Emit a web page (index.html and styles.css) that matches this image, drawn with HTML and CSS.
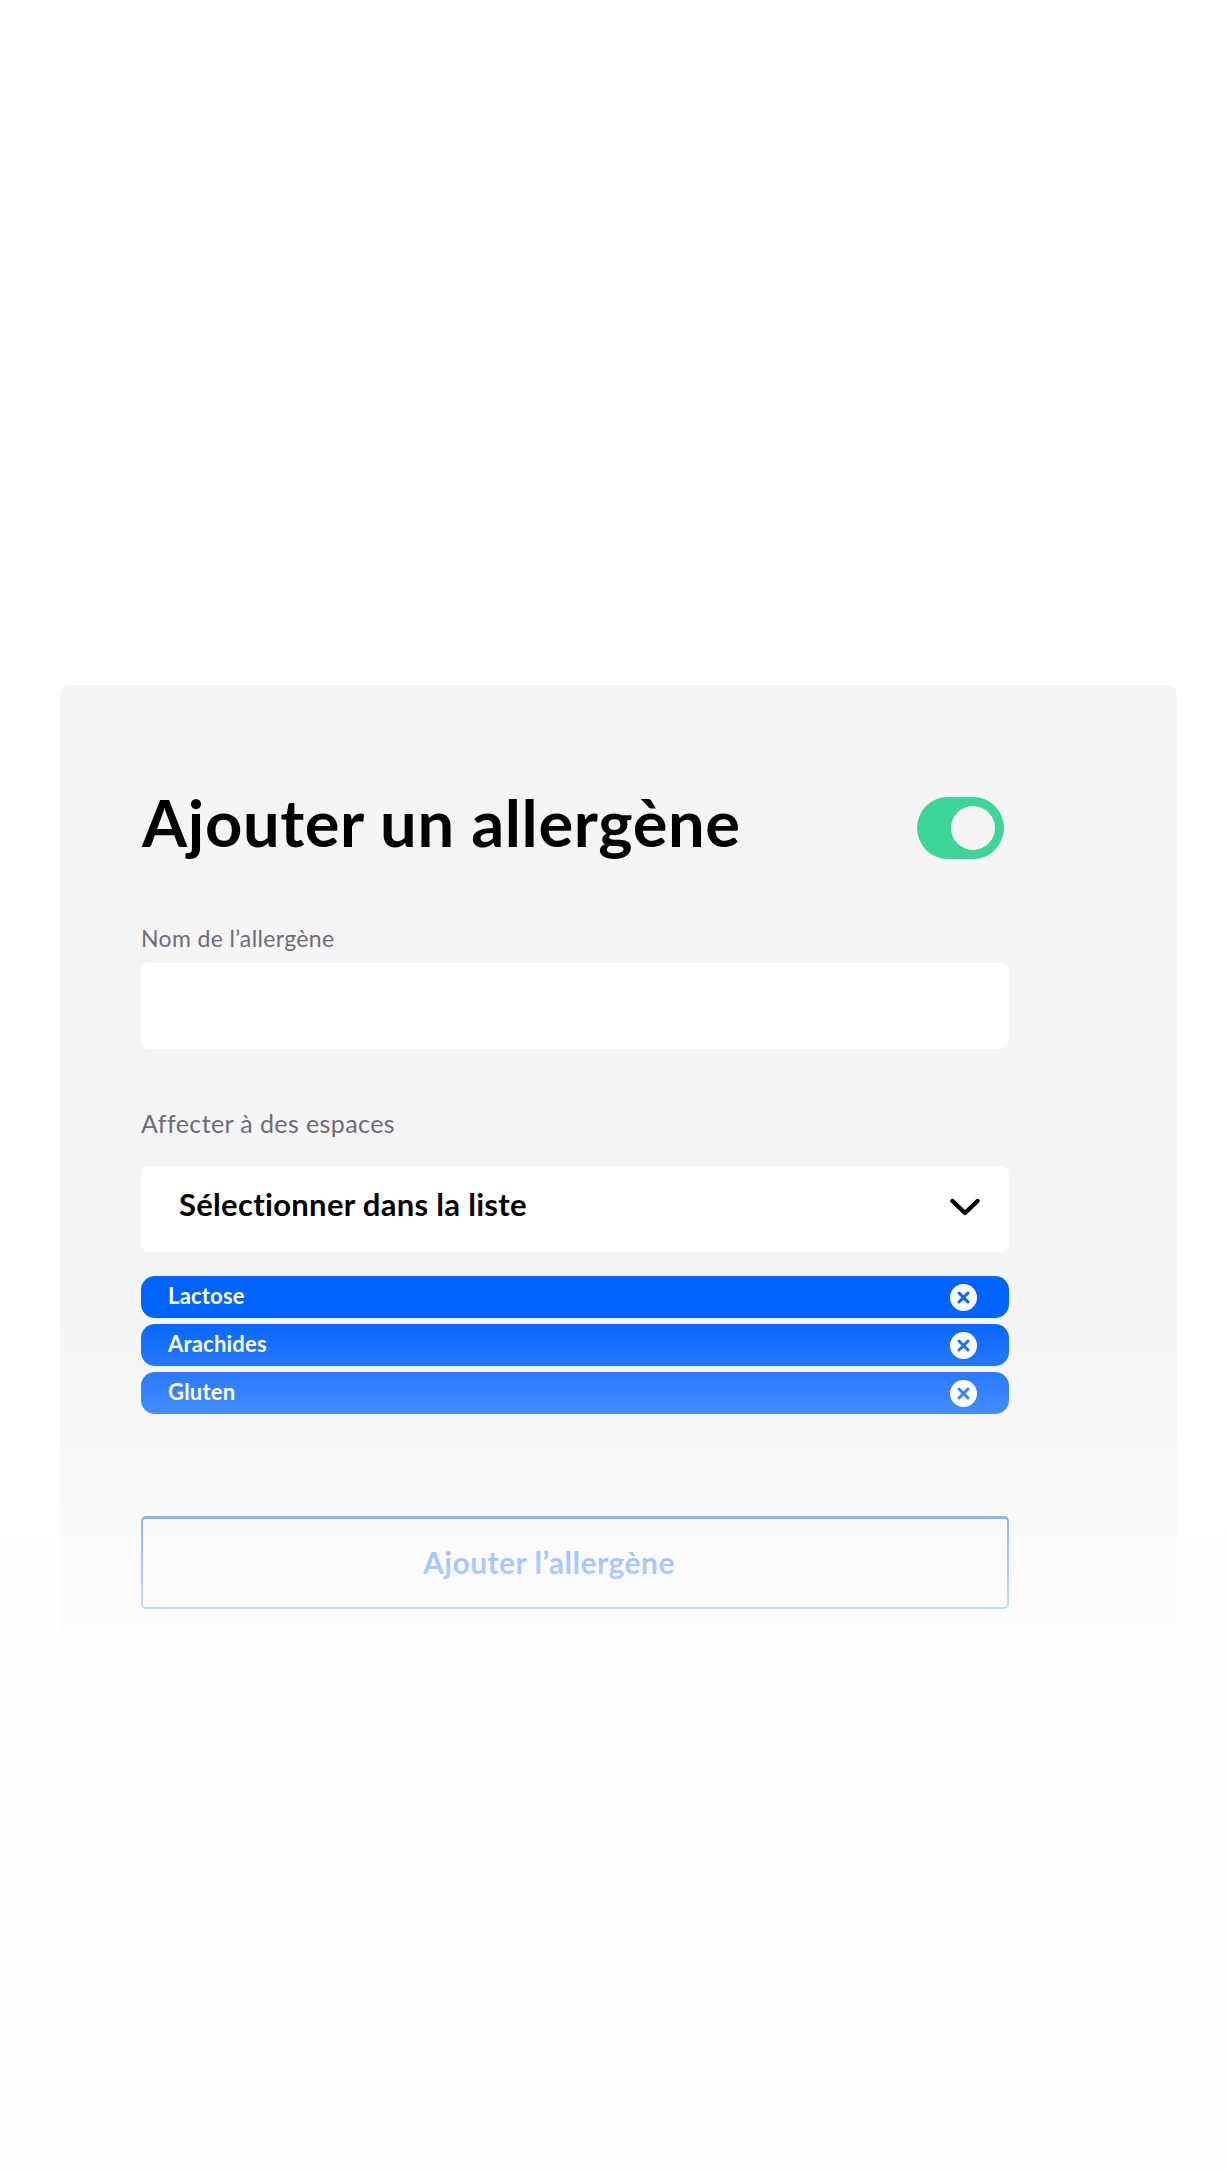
FILE: index.html
```html
<!DOCTYPE html>
<html lang="fr">
<head>
<meta charset="utf-8">
<title>Ajouter un allergène</title>
<link rel="stylesheet" href="styles.css">
</head>
<body>
<main class="page">
  <section class="card">
    <header class="head">
      <h1 class="title">Ajouter un allergène</h1>
      <span class="toggle"><span class="knob"></span></span>
    </header>
    <label class="label label-name">Nom de l’allergène</label>
    <div class="input"></div>
    <label class="label label-spaces">Affecter à des espaces</label>
    <div class="select">
      <span class="select-text">Sélectionner dans la liste</span>
      <svg class="chevron" width="30" height="18" viewBox="0 0 30 18"><path d="M2.5 3 L15 15 L27.5 3" fill="none" stroke="#000" stroke-width="4.4" stroke-linecap="round" stroke-linejoin="round"/></svg>
    </div>
    <ul class="chips">
      <li class="chip"><span>Lactose</span><svg class="x" width="27" height="27" viewBox="0 0 27 27"><circle cx="13.5" cy="13.5" r="13.5" fill="#fff"/><path d="M9 9 L18 18 M18 9 L9 18" stroke="#0062ff" stroke-width="3" stroke-linecap="round"/></svg></li>
      <li class="chip"><span>Arachides</span><svg class="x" width="27" height="27" viewBox="0 0 27 27"><circle cx="13.5" cy="13.5" r="13.5" fill="#fff"/><path d="M9 9 L18 18 M18 9 L9 18" stroke="#0062ff" stroke-width="3" stroke-linecap="round"/></svg></li>
      <li class="chip"><span>Gluten</span><svg class="x" width="27" height="27" viewBox="0 0 27 27"><circle cx="13.5" cy="13.5" r="13.5" fill="#fff"/><path d="M9 9 L18 18 M18 9 L9 18" stroke="#0062ff" stroke-width="3" stroke-linecap="round"/></svg></li>
    </ul>
    <div class="button">Ajouter l’allergène</div>
  </section>
</main>
<div class="fade"></div>
</body>
</html>
```
FILE: styles.css
```css
html, body { margin: 0; padding: 0; background: #fff; }
body { position: relative; height: 2172px; overflow: hidden; font-family: "Lato", "Liberation Sans", sans-serif; }
.page { padding: 685px 50px 0 60px; }
.card { background: #f5f5f5; border-radius: 10px; padding: 112px 168px 47px 81px; height: 971px; box-sizing: border-box; }
.head { display: flex; justify-content: space-between; height: 62px; padding-right: 5px; }
.title { margin: -6px 0 0 1px; font-size: 65px; line-height: 62px; font-weight: 700; color: #000; letter-spacing: .65px; }
.toggle { display: flex; justify-content: flex-end; align-items: center; width: 87px; height: 62px; box-sizing: border-box; padding-right: 9px; background: #3ed598; border-radius: 31px; flex: none; }
.knob { width: 44px; height: 44px; border-radius: 50%; background: #f5f5f5; }
.label { display: block; color: #6c6c7a; }
.label-name { margin-top: 67px; margin-bottom: 13px; font-size: 23px; line-height: 24px; letter-spacing: .35px; }
.input { height: 86px; background: #fff; border-radius: 8px; }
.label-spaces { margin-top: 61px; margin-bottom: 30px; font-size: 25px; line-height: 26px; letter-spacing: .4px; }
.select { height: 86px; background: #fff; border-radius: 8px; display: flex; align-items: flex-start; justify-content: space-between; padding: 0 29px 0 38px; box-sizing: border-box; }
.select-text { font-size: 31px; line-height: 76px; font-weight: 700; color: #000; letter-spacing: .3px; }
.chevron { margin-top: 32px; }
.chips { list-style: none; margin: 24px 0 0; padding: 0; display: flex; flex-direction: column; gap: 6px; }
.chip { height: 42px; border-radius: 14px; background: #0062ff; color: #fff; font-size: 22px; font-weight: 700; letter-spacing: .2px; display: flex; align-items: center; justify-content: space-between; padding: 0 32px 0 27px; }
.chip span { margin-top: -3px; }
.button { margin-top: 102px; height: 93px; box-sizing: border-box; border: 2px solid #0062ff; border-top-width: 3px; border-radius: 5px; display: flex; align-items: center; justify-content: center; padding: 0 52px 2px 0; color: #0062ff; font-size: 30px; font-weight: 700; letter-spacing: .5px; }
.fade { position: absolute; left: 0; right: 0; top: 1310px; bottom: 0; background: linear-gradient(to bottom, rgba(254,254,254,0) 0, rgba(254,254,254,.98) 380px, #fdfdfd 100%); }
```
